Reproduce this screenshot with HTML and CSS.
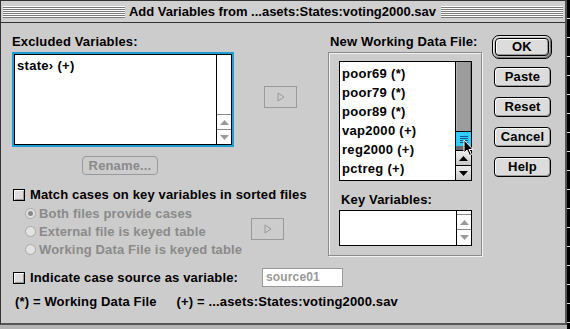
FILE: index.html
```html
<!DOCTYPE html>
<html lang="en">
  <head>
    <meta charset="UTF-8" />
    <title>Add Variables</title>
    <link rel="stylesheet" href="styles.css">
  </head>
  <body>
    <div class="screen">
      <div class="stack">
        <div class="window">
          <div class="titlebar">
            <span class="stripes"></span>
            <span class="title">Add Variables from ...asets:States:voting2000.sav</span>
            <span class="stripes"></span>
          </div>

          <div class="content">
            <div class="top">
              <!-- left side: excluded list, rename, match options -->
              <div class="left-col">
                <div class="label">Excluded Variables:</div>
                <div class="pick-row">
                  <div class="ring">
                    <div class="listbox excluded">
                      <div class="items"><div>state› (+)</div></div>
                      <div class="scroll off">
                        <div class="track"></div>
                        <div class="arr"><svg width="9" height="5"><polygon points="0,5 9,5 4.5,0" fill="#999"/></svg></div>
                        <div class="arr"><svg width="9" height="5"><polygon points="0,0 9,0 4.5,5" fill="#999"/></svg></div>
                      </div>
                    </div>
                  </div>
                  <div class="move-btn first">
                    <svg width="8" height="10"><polygon points="1,1 7,5 1,9" fill="none" stroke="#999" stroke-width="1"/></svg>
                  </div>
                </div>

                <div class="rename">Rename...</div>

                <div class="check match"><span class="box"></span>Match cases on key variables in sorted files</div>

                <div class="radio-row">
                  <div class="radios">
                    <div class="radio on"><span class="dot"></span>Both files provide cases</div>
                    <div class="radio"><span class="dot"></span>External file is keyed table</div>
                    <div class="radio"><span class="dot"></span>Working Data File is keyed table</div>
                  </div>
                  <div class="move-btn second">
                    <svg width="8" height="10"><polygon points="1,1 7,5 1,9" fill="none" stroke="#999" stroke-width="1"/></svg>
                  </div>
                </div>
              </div>

              <!-- right side: new working data file group -->
              <div class="right-col">
                <div class="label">New Working Data File:</div>
                <div class="groupbox">
                  <div class="listbox working">
                    <div class="items">
                      <div>poor69 (*)</div>
                      <div>poor79 (*)</div>
                      <div>poor89 (*)</div>
                      <div>vap2000 (+)</div>
                      <div>reg2000 (+)</div>
                      <div>pctreg (+)</div>
                    </div>
                    <div class="scroll on">
                      <div class="track"></div>
                      <div class="thumb"><span></span><span></span><span></span><span></span></div>
                      <div class="gap"></div>
                      <div class="arr"><svg width="9" height="5"><polygon points="0,5 9,5 4.5,0" fill="#000"/></svg></div>
                      <div class="arr"><svg width="9" height="5"><polygon points="0,0 9,0 4.5,5" fill="#000"/></svg></div>
                    </div>
                  </div>
                  <div class="label key">Key Variables:</div>
                  <div class="listbox keys">
                    <div class="items"></div>
                    <div class="scroll off">
                      <div class="track"></div>
                      <div class="arr"><svg width="9" height="5"><polygon points="0,5 9,5 4.5,0" fill="#999"/></svg></div>
                      <div class="arr"><svg width="9" height="5"><polygon points="0,0 9,0 4.5,5" fill="#999"/></svg></div>
                    </div>
                  </div>
                </div>
              </div>

              <div class="buttons">
                <div class="default-ring"><div class="btn ok">OK</div></div>
                <div class="btn">Paste</div>
                <div class="btn">Reset</div>
                <div class="btn">Cancel</div>
                <div class="btn">Help</div>
              </div>
            </div>

            <div class="bottom">
              <div class="source-row">
                <div class="check"><span class="box"></span>Indicate case source as variable:</div>
                <div class="field">source01</div>
              </div>
              <div class="legend">
                <span>(*) = Working Data File</span>
                <span>(+) = ...asets:States:voting2000.sav</span>
              </div>
            </div>
          </div>
        </div>
        <div class="under"></div>
      </div>
      <div class="edge"></div>

      <svg class="cursor" width="12" height="18" viewBox="0 0 12 18">
        <polygon points="1,1 1,14 4,11 6.5,16.5 8.5,15.5 6,10.5 10,10.5" fill="#000" stroke="#fff" stroke-width="1"/>
      </svg>
    </div>
  </body>
</html>
```

FILE: styles.css
```css
* {
  margin: 0;
  padding: 0;
  box-sizing: border-box;
}
body {
  background: #000;
  font-family: "Liberation Sans", Arial, sans-serif;
  font-size: 13px;
  font-weight: bold;
  letter-spacing: 0.15px;
  color: #000;
}
.screen {
  position: relative;
  width: 570px;
  height: 329px;
  display: flex;
  overflow: hidden;
  background: #000;
}
.stack {
  width: 567px;
  display: flex;
  flex-direction: column;
}
.window {
  height: 325px;
  background: #cccccc;
  border: 1px solid #333;
  border-right: 2px solid #555;
  border-bottom: 2px solid #555;
}
.under {
  flex: 1;
  background: #b4b4b4;
}
.edge {
  width: 3px;
  background: repeating-linear-gradient(#000 0 18px, #ddd 18px 19px);
}

/* title bar */
.titlebar {
  height: 22px;
  display: flex;
  align-items: center;
  padding: 0 2px 0 2px;
  border-bottom: 1px solid #333;
  background: #d0d0d0;
}
.stripes {
  flex: 1;
  height: 12px;
  background: repeating-linear-gradient(#fff 0 1px, #7a7a7a 1px 2px);
}
.title {
  padding: 0 5px 0 4px;
  line-height: 16px;
  letter-spacing: 0;
  white-space: nowrap;
}

.content {
  padding: 11px 0 0 11px;
}
.top {
  display: flex;
}
.label {
  height: 16px;
  line-height: 16px;
  margin-bottom: 2px;
  white-space: nowrap;
}

/* left column */
.left-col {
  width: 316px;
}
.pick-row {
  display: flex;
}
.ring {
  width: 222px;
  height: 95px;
  border: 2px solid #1f9ed3;
}
.listbox {
  display: flex;
  border: 1px solid #000;
  background: #fff;
}
.listbox.excluded {
  height: 100%;
}
.items {
  flex: 1;
  padding: 2px 0 0 2px;
  line-height: 19px;
  letter-spacing: 0.3px;
  white-space: nowrap;
}
.excluded .items {
  padding-top: 1px;
}
.scroll {
  display: flex;
  flex-direction: column;
  border-left: 1px solid #000;
}
.scroll.off {
  width: 15px;
}
.scroll .track {
  flex: 1;
}
.scroll .arr {
  height: 15px;
  display: flex;
  align-items: center;
  justify-content: center;
  border-top: 1px solid #888;
}
.scroll.on {
  width: 16px;
}
.scroll.on .track {
  background: #9c9c9c;
  border-left: 1px solid #b0b0b0;
  border-right: 1px solid #7c7c7c;
}
.thumb {
  height: 15px;
  background: #33ccff;
  border-top: 1px solid #000;
  display: flex;
  flex-direction: column;
  justify-content: center;
  align-items: center;
  gap: 1px;
}
.thumb span {
  width: 8px;
  height: 1px;
  background: #0a5c8a;
}
.scroll.on .gap {
  height: 4px;
  background: #6a6a6a;
}
.scroll.on .arr {
  background: linear-gradient(#eee, #c8c8c8);
  border-top: 1px solid #000;
}

.move-btn {
  width: 33px;
  height: 22px;
  border: 1px solid #999;
  display: flex;
  align-items: center;
  justify-content: center;
}
.move-btn.first {
  margin: 34px 0 0 30px;
}
.move-btn.second {
  margin: 14px 0 0 0;
}

.rename {
  width: 76px;
  height: 19px;
  margin: 9px 0 0 70px;
  border: 1px solid #999;
  border-radius: 4px;
  color: #8a8a8a;
  text-align: center;
  line-height: 17px;
}

.check {
  display: flex;
  align-items: center;
  white-space: nowrap;
  line-height: 16px;
}
.check .box {
  width: 12px;
  height: 12px;
  margin: 0 5px 0 1px;
  border: 1px solid #000;
  background: #ddd;
  box-shadow: inset 1px 1px 0 #fff, inset -1px -1px 0 #999;
}
.check.match {
  margin-top: 12px;
}

.radio-row {
  display: flex;
  margin-top: 1px;
}
.radios {
  width: 239px;
  padding-left: 13px;
}
.radio {
  height: 18px;
  display: flex;
  align-items: center;
  color: #8a8a8a;
  white-space: nowrap;
}
.radio .dot {
  width: 11px;
  height: 11px;
  margin-right: 3px;
  border: 1px solid #a8a8a8;
  border-radius: 50%;
  background: #e2e2e2;
  display: flex;
  align-items: center;
  justify-content: center;
}
.radio.on .dot::after {
  content: "";
  width: 5px;
  height: 5px;
  border-radius: 50%;
  background: #8a8a8a;
}

/* group box */
.right-col {
  width: 154px;
}
.right-col > .label {
  padding-left: 2px;
}
.groupbox {
  height: 204px;
  padding: 8px 0 0 10px;
  border: 1px solid #8c8c8c;
  box-shadow: inset 1px 1px 0 #f2f2f2, 1px 1px 0 #f2f2f2;
}
.listbox.working {
  width: 133px;
  height: 120px;
}
.label.key {
  margin: 11px 0 2px 2px;
}
.listbox.keys {
  width: 133px;
  height: 36px;
}
.keys .scroll .track {
  flex: 0 0 3px;
}

/* push buttons */
.buttons {
  margin-left: 10px;
  padding-top: 1px;
  display: flex;
  flex-direction: column;
  gap: 10px;
}
.default-ring {
  width: 60px;
  height: 24px;
  padding: 2px;
  margin-bottom: -2px;
  border: 1px solid #000;
  border-radius: 7px;
  background: #bbb;
  box-shadow: inset 1px 1px 0 #eee, inset -1px -1px 0 #777;
}
.btn {
  width: 57px;
  height: 20px;
  margin-left: 2px;
  border: 1px solid #000;
  border-radius: 4px;
  background: #dcdcdc;
  box-shadow: inset 1px 1px 0 #fff, inset -1px -1px 0 #999;
  text-align: center;
  line-height: 18px;
}
.btn.ok {
  width: 54px;
  height: 18px;
  margin: 0;
  line-height: 16px;
}

/* bottom rows */
.bottom {
  margin-top: 10px;
}
.source-row {
  display: flex;
  align-items: center;
}
.source-row .check {
  width: 250px;
}
.field {
  width: 81px;
  height: 19px;
  border: 1px solid #999;
  background: #fff;
  color: #999;
  font-size: 12px;
  line-height: 17px;
  padding-left: 3px;
}
.legend {
  margin-top: 7px;
  padding-left: 3px;
  display: flex;
  gap: 20px;
  line-height: 16px;
}

.cursor {
  position: absolute;
  left: 463px;
  top: 139px;
}
```
